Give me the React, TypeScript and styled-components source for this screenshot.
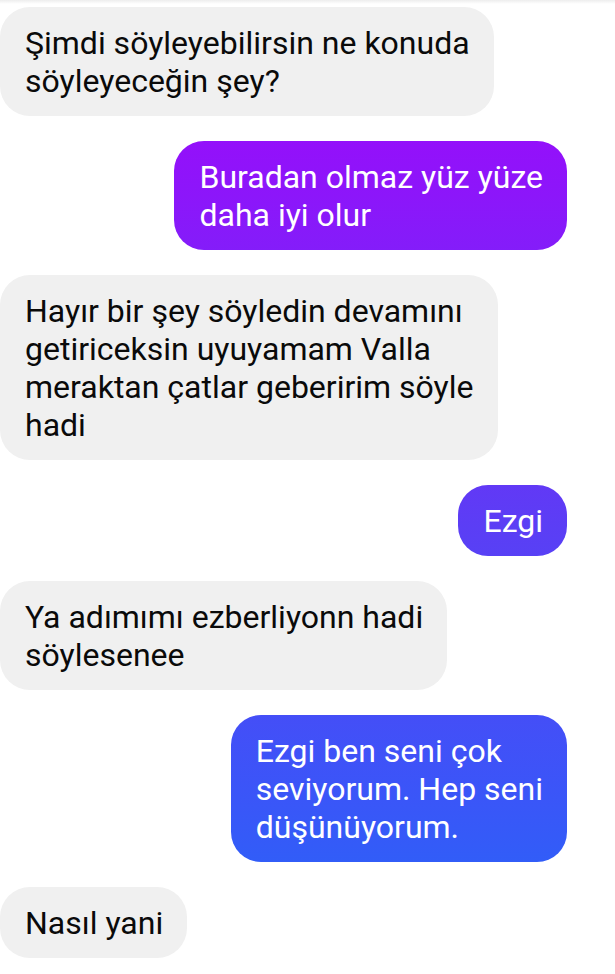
import { FC } from "react";
import styled, { createGlobalStyle } from "styled-components";

type Message = {
  id: number;
  mine: boolean;
  lines: string[];
};

// lines are kept as the phone wrapped them, so bubbles hug the widest line
const messages: Message[] = [
  { id: 1, mine: false, lines: ["Şimdi söyleyebilirsin ne konuda", "söyleyeceğin şey?"] },
  { id: 2, mine: true, lines: ["Buradan olmaz yüz yüze", "daha iyi olur"] },
  {
    id: 3,
    mine: false,
    lines: [
      "Hayır bir şey söyledin devamını",
      "getiriceksin uyuyamam Valla",
      "meraktan çatlar geberirim söyle",
      "hadi",
    ],
  },
  { id: 4, mine: true, lines: ["Ezgi"] },
  { id: 5, mine: false, lines: ["Ya adımımı ezberliyonn hadi", "söylesenee"] },
  { id: 6, mine: true, lines: ["Ezgi ben seni çok", "seviyorum. Hep seni", "düşünüyorum."] },
  { id: 7, mine: false, lines: ["Nasıl yani"] },
];

const App: FC = () => {
  return (
    <>
      <GlobalStyle />
      <StRoot>
        <StTopShade />
        <StThread>
          {messages.map((m) => (
            <StBubble key={m.id} $mine={m.mine}>
              {m.lines.map((line, i) => (
                <StLine key={i}>{line}</StLine>
              ))}
            </StBubble>
          ))}
        </StThread>
      </StRoot>
    </>
  );
};

export default App;

const GlobalStyle = createGlobalStyle`
  html, body {
    margin: 0;
    padding: 0;
    background: #ffffff;
  }
  body {
    font-family: Roboto, "Noto Sans", "Liberation Sans", sans-serif;
    -webkit-font-smoothing: antialiased;
  }
`;

const StRoot = styled.div`
  width: 615px;
  height: 974px;
  overflow: hidden;
  background: #ffffff;
`;

const StTopShade = styled.div`
  height: 4px;
  background: linear-gradient(180deg, #ededed 0%, #ffffff 100%);
`;

const StThread = styled.div`
  display: flex;
  flex-direction: column;
  gap: 25px;
  padding: 3px 48px 0 0;
`;

const StBubble = styled.div<{ $mine: boolean }>`
  align-self: ${({ $mine }) => ($mine ? "flex-end" : "flex-start")};
  box-sizing: border-box;
  padding: 17px 24px 16px 25px;
  border-radius: 30px;
  font-size: 32px;
  line-height: 38px;
  color: ${({ $mine }) => ($mine ? "#ffffff" : "#0a0a0a")};
  background: ${({ $mine }) =>
    $mine
      ? "linear-gradient(180deg, #a702fb 0px, #8c16fa 196px, #5b3ef5 528px, #3b55f8 790px, #2369f8 974px)"
      : "#f0f0f0"};
  background-attachment: ${({ $mine }) => ($mine ? "fixed" : "scroll")};
`;

const StLine = styled.span`
  display: block;
  white-space: nowrap;
`;
